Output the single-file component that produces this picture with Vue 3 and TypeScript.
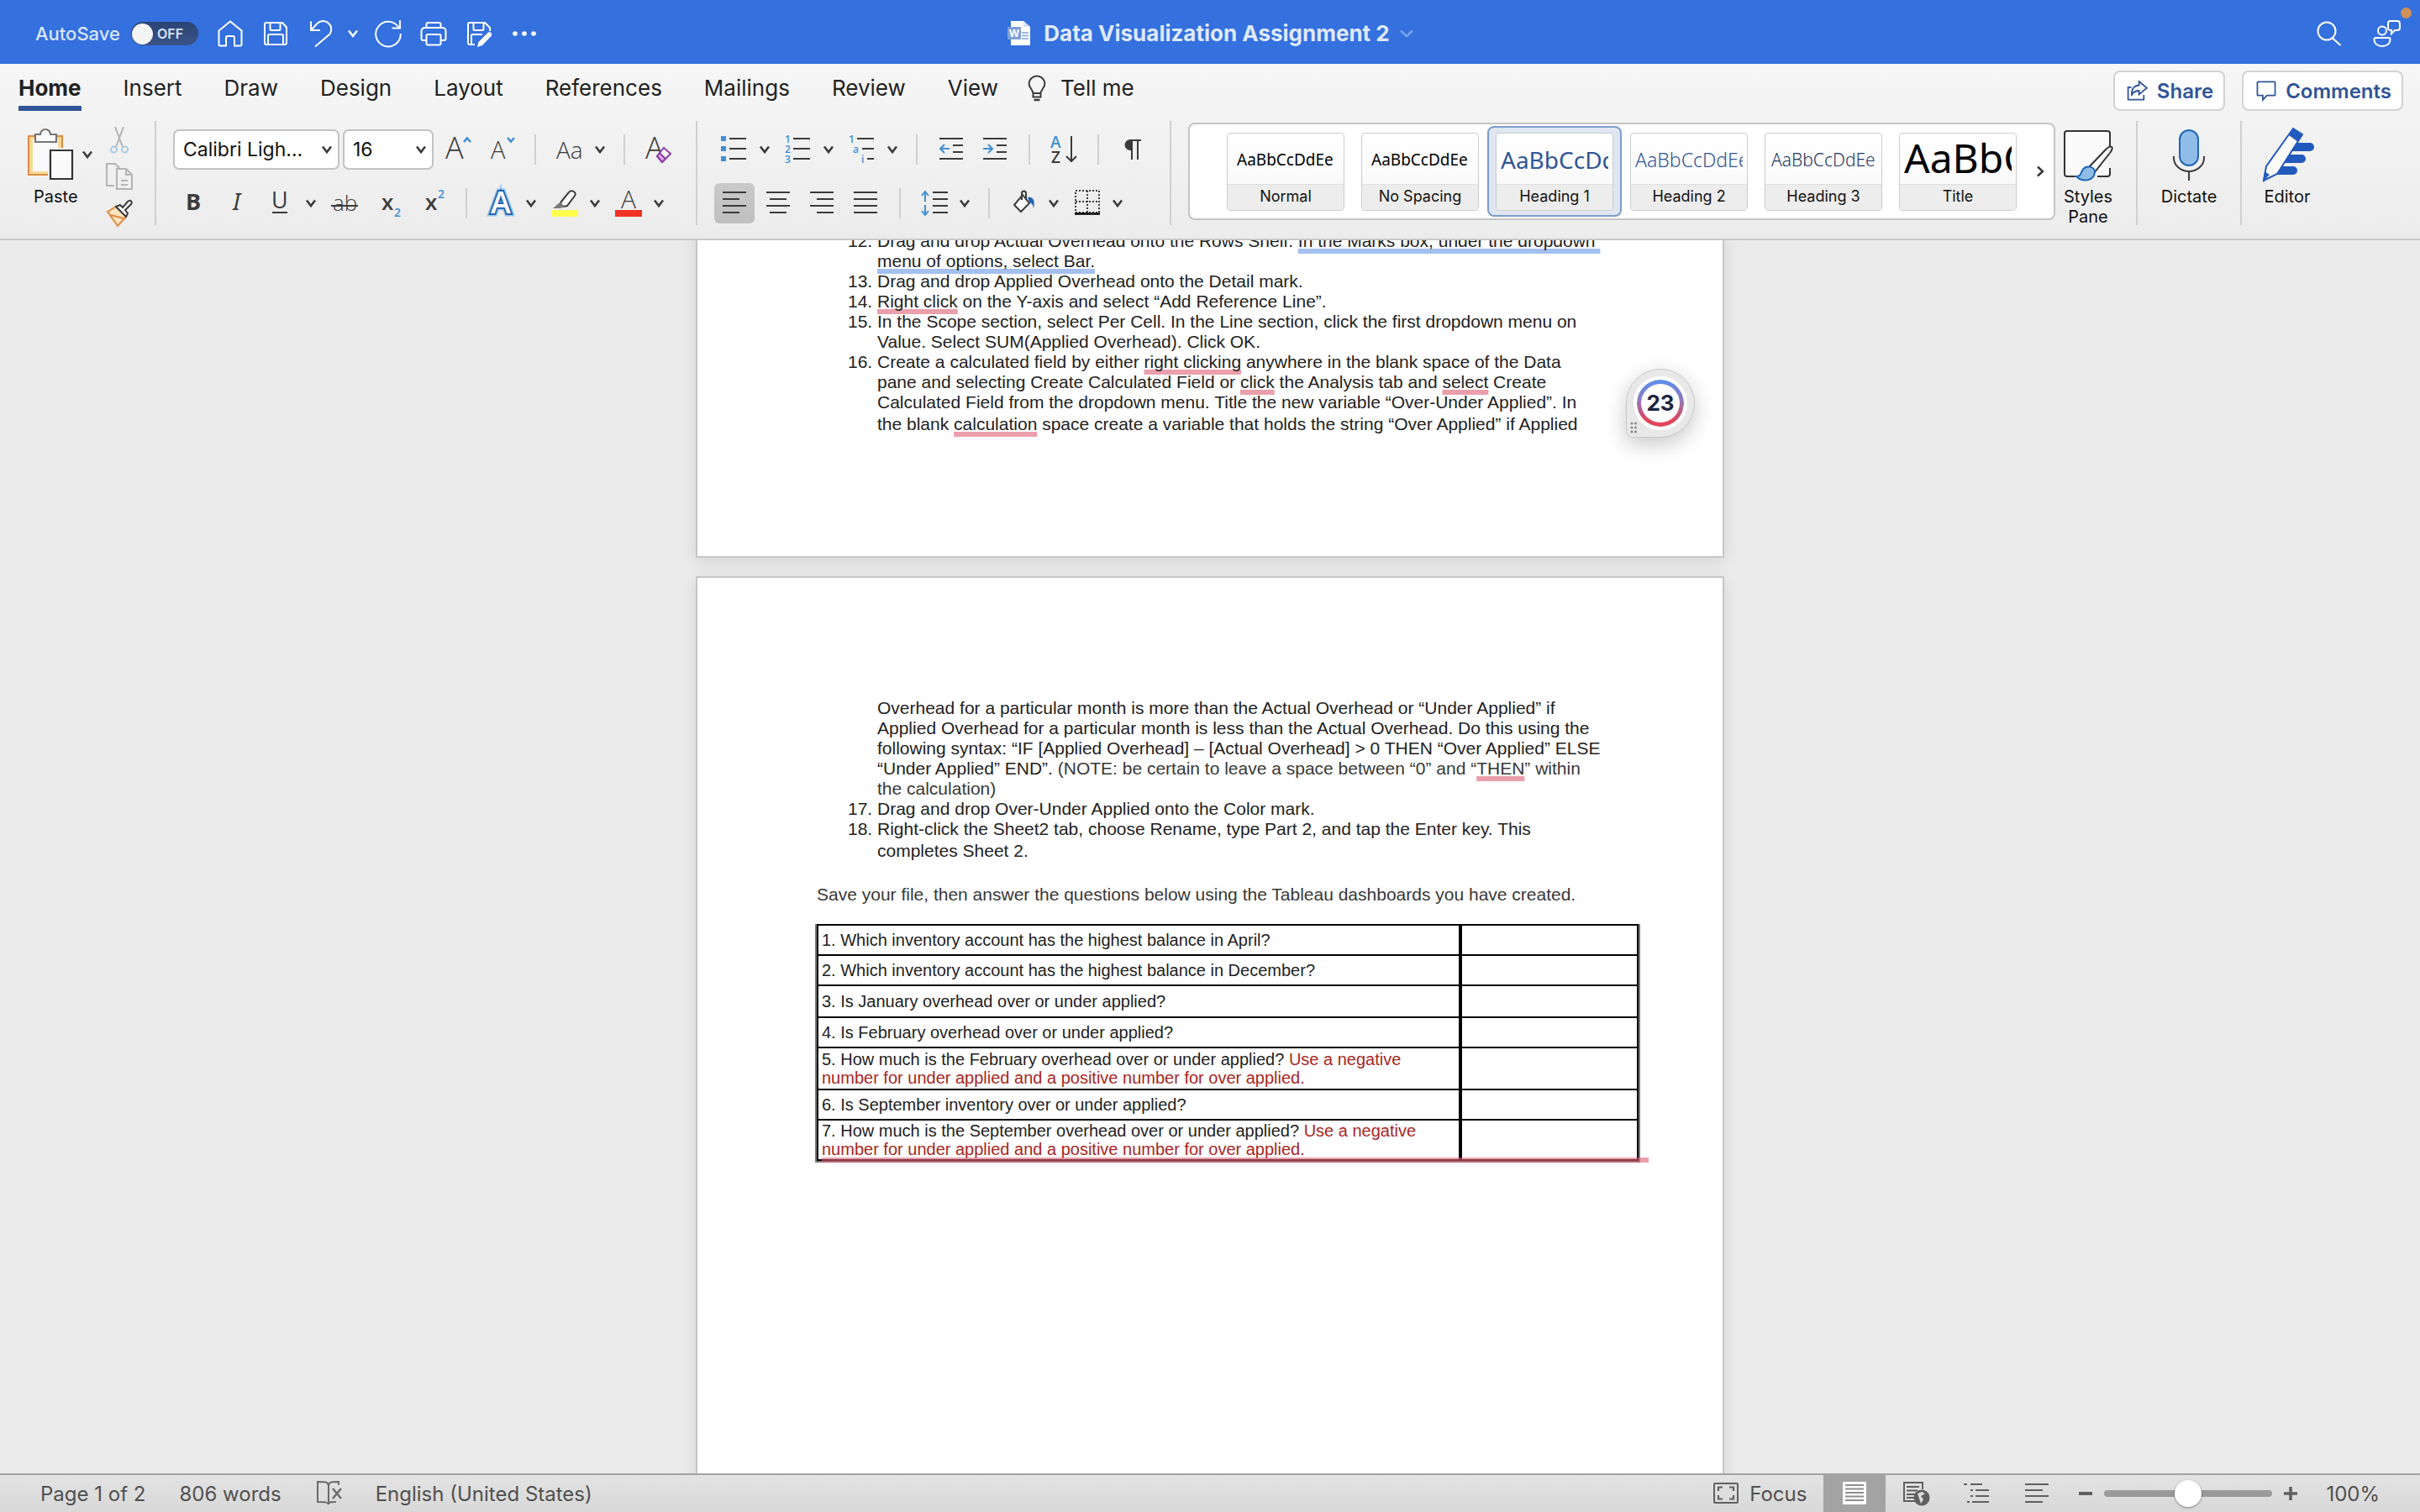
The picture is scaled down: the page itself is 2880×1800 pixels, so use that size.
<script setup lang="ts">
interface Style {
  name: string
  kind: string
  active?: boolean
}

interface Question {
  text: string
  hint?: string
  size: string
}

const tabs: string[] = ['Home', 'Insert', 'Draw', 'Design', 'Layout', 'References', 'Mailings', 'Review', 'View']

const styles: Style[] = [
  { name: 'Normal', kind: 'normal' },
  { name: 'No Spacing', kind: 'normal' },
  { name: 'Heading 1', kind: 'h1', active: true },
  { name: 'Heading 2', kind: 'h2' },
  { name: 'Heading 3', kind: 'h3' },
  { name: 'Title', kind: 'title' },
]

const hint = 'Use a negative number for under applied and a positive number for over applied.'

const questions: Question[] = [
  { text: '1. Which inventory account has the highest balance in April?', size: 'short' },
  { text: '2. Which inventory account has the highest balance in December?', size: 'short' },
  { text: '3. Is January overhead over or under applied?', size: 'medium' },
  { text: '4. Is February overhead over or under applied?', size: 'short' },
  { text: '5. How much is the February overhead over or under applied?', hint, size: 'tall' },
  { text: '6. Is September inventory over or under applied?', size: 'short' },
  { text: '7. How much is the September overhead over or under applied?', hint, size: 'tall' },
]

const ink = '#3b3b3b'
const blue = '#3f8fd2'
const sans = 'font-family="Open Sans, Noto Sans, sans-serif"'

const stroke = (d: string, color = ink, width = 2, fill = 'none'): string =>
  `<path d="${d}" fill="${fill}" stroke="${color}" stroke-width="${width}"/>`

const icons: Record<string, string> = {
  caret: '<path d="M1 1.500 6 8l5-6.500" fill="none" stroke="#3b3b3b" stroke-width="2.600"/>',
  home: stroke('M2.500 12.500 16 1.500l13.500 11V29a1.500 1.500 0 0 1-1.500 1.500h-7V21a2 2 0 0 0-2-2h-6a2 2 0 0 0-2 2v9.500H4A1.500 1.500 0 0 1 2.500 29z', '#fff'),
  save: stroke('M5 3h19l5 5.500V27a2 2 0 0 1-2 2H5a2 2 0 0 1-2-2V5a2 2 0 0 1 2-2zM9.500 3v7.500a1.500 1.500 0 0 0 1.500 1.500h9a1.500 1.500 0 0 0 1.500-1.500V3M7 29V18.500A1.500 1.500 0 0 1 8.500 17h15a1.500 1.500 0 0 1 1.500 1.500V29', '#fff'),
  undo: stroke('M4 1.500V12h11M4.500 11.500 11.500 4a9.800 9.800 0 0 1 15 12.500L9 31.500', '#fff'),
  redo: stroke('M20.500 9.500H30V0M29 9.500A14.800 14.800 0 1 0 30.800 16', '#fff'),
  print: stroke('M7.500 9V5a2 2 0 0 1 2-2h13a2 2 0 0 1 2 2v4M7.500 24H3.500a2 2 0 0 1-2-2V13a4 4 0 0 1 4-4h21a4 4 0 0 1 4 4v9a2 2 0 0 1-2 2h-4M9 17h14a1.500 1.500 0 0 1 1.500 1.500V28a1.500 1.500 0 0 1-1.500 1.500H9A1.500 1.500 0 0 1 7.500 28v-9.500A1.500 1.500 0 0 1 9 17z', '#fff'),
  saveas: stroke('M11 29H5a2 2 0 0 1-2-2V5a2 2 0 0 1 2-2h18l6 6v4M9.500 3v7.500a1.500 1.500 0 0 0 1.500 1.500h9a1.500 1.500 0 0 0 1.500-1.500V3M7 29V18.500A1.500 1.500 0 0 1 8.500 17H20', '#fff') +
    '<path d="m14 32 1.500-6L27 14.500a3 3 0 0 1 4 4L20 30z" fill="#fff"/>',
  dots: '<g fill="#fff"><circle cx="5" cy="16" r="2.800"/><circle cx="16" cy="16" r="2.800"/><circle cx="27" cy="16" r="2.800"/></g>',
  search: stroke('M20 21.500 29.500 30', '#fff') + '<circle cx="13" cy="13" r="10.500" fill="none" stroke="#fff" stroke-width="2"/>',
  people: '<circle cx="11" cy="12.500" r="5" fill="none" stroke="#fff" stroke-width="2"/>' +
    stroke('M3 21h16a1.500 1.500 0 0 1 1.500 1.500C20.500 28 16.500 31 11 31S1.500 28 1.500 22.500A1.500 1.500 0 0 1 3 21zM20 1h9a3 3 0 0 1 3 3v5a3 3 0 0 1-3 3h-3l-4 4v-4a3 3 0 0 1-4-3V4a3 3 0 0 1 2-3z', '#fff'),
  word: '<path d="M5 1h15l8 7v22H5z" fill="#fff"/><path d="M20 1v7h8z" fill="#d8e2f4"/><path d="M18 15h8M18 18.500h8M18 22h8" stroke="#7ea3e0" stroke-width="1.500"/><rect x="1" y="8" width="16" height="15" rx="1" fill="#7f9fd8"/><text x="9" y="20" font-size="12" font-weight="700" fill="#fff" text-anchor="middle" font-family="Inter, sans-serif">W</text>',
  bulb: stroke('M9.500 22c0-4-5-6-5-12A9.500 9.500 0 0 1 14 1.500 9.500 9.500 0 0 1 23.500 10c0 6-5 8-5 12zM9.500 22v4.500h9V22', ink) + stroke('M10.500 30h7', ink, 2.500),
  share: stroke('M7 11H2v18h23v-7', '#2f5597', 2.200) + stroke('M18 2.500 29.500 12 18 21.500V16C12 16 9 18 7 23 7 14 10 8.500 18 8z', '#2f5597', 2.200),
  comment: stroke('M4 3h24a1 1 0 0 1 1 1v18a1 1 0 0 1-1 1H17l-6 6.500V23H4a1 1 0 0 1-1-1V4a1 1 0 0 1 1-1z', '#2f5597', 2.200),
  paste: '<path d="M2 10h40v46H2z" fill="#f6d998" stroke="#e08a3c" stroke-width="2"/><path d="M7 13h30v39H7z" fill="#fafafa"/>' +
    '<path d="M10 8h6a6 6 0 0 1 12 0h7v9H10z" fill="#fafafa" stroke="#767676" stroke-width="2.200"/><path d="M25 24h32v36H25z" fill="#f2f2f2"/><path d="M28 27h26v34H28z" fill="#fafafa" stroke="#333" stroke-width="2.200"/>',
  cut: stroke('M11 1l9 24M21 1l-9 24', '#b4b4b4', 2) + '<g fill="none" stroke="#a9cde8" stroke-width="2"><circle cx="9.500" cy="28" r="3.500"/><circle cx="22.500" cy="28" r="3.500"/></g>',
  copy: stroke('M10 27H1V1h10l5 5M13 7h11l7 7v17H13zM24 7v7h7M18 21h8M18 26h8', '#b4b4b4', 2),
  painter: '<path d="M2 14 12 8l12 12-10 11z" fill="#fbe3bf" stroke="#e08a3c" stroke-width="2"/><path d="m6 18 15 4" stroke="#e08a3c" stroke-width="2"/><path d="m12 8 5-2 3 3 6-7c3-3 6 0 4 3l-7 7 3 4-2 4z" fill="#fafafa" stroke="#3b3b3b" stroke-width="2"/>',
  grow: `<text x="0" y="27" font-size="36" font-weight="300" fill="${ink}" ${sans}>A</text>` + stroke('M22 7 26 2.500 30 7', blue, 2.500),
  shrink: `<text x="2" y="27" font-size="29" font-weight="300" fill="${ink}" ${sans}>A</text>` + stroke('M22 2 26 6.500 30 2', blue, 2.500),
  eraser: `<text x="0" y="27" font-size="36" font-weight="300" fill="${ink}" ${sans}>A</text><path d="m14 24 8-10 8 7-10 10z" fill="#fff" stroke="#8e3fa4" stroke-width="2"/><path d="m14 24 3-4 7 7-4 4z" fill="#d9a6e3" stroke="#8e3fa4" stroke-width="2"/>`,
  bold: `<text x="7" y="24" font-size="27" font-weight="700" fill="${ink}" ${sans}>B</text>`,
  italic: `<text x="11" y="24" font-size="28" font-style="italic" fill="${ink}" font-family="Noto Sans, sans-serif">I</text>`,
  underline: `<text x="7" y="22" font-size="27" fill="${ink}" ${sans}>U</text>` + stroke('M8 27h18'),
  strike: `<text x="2" y="25" font-size="26" font-weight="300" fill="${ink}" ${sans}>ab</text>` + stroke('M0 19h32'),
  sub: `<text x="4" y="24" font-size="26" font-weight="600" fill="${ink}" ${sans}>x</text><text x="19" y="32" font-size="14" font-weight="600" fill="${blue}" ${sans}>2</text>`,
  sup: `<text x="4" y="24" font-size="26" font-weight="600" fill="${ink}" ${sans}>x</text><text x="19" y="10" font-size="14" font-weight="600" fill="${blue}" ${sans}>2</text>`,
  glow: `<g ${sans} font-size="36" font-weight="600" text-anchor="middle"><text x="16" y="28" fill="#9ec8ee" stroke="#9ec8ee" stroke-width="7">A</text><text x="16" y="28" fill="#1f66b5" stroke="#1f66b5" stroke-width="4">A</text><text x="16" y="28" fill="#fff">A</text></g>`,
  marker: '<path d="m12 14 9-11c3-4 10 0 7 4l-9 12-4 1-4-3z" fill="#fafafa" stroke="#3b3b3b" stroke-width="2"/><path d="m10 15 6 5-5 2H2z" fill="#7a7a7a"/><path d="M0 24h32v8H0z" fill="#ffff4d"/>',
  color: `<text x="16" y="22" font-size="30" font-weight="300" text-anchor="middle" fill="${ink}" ${sans}>A</text><path d="M0 24h32v8H0z" fill="#ee3124"/>`,
  bullets: '<path d="M0 0h6v6H0zM0 12h6v6H0zM0 24h6v6H0z" fill="#3f8fd2"/>' + stroke('M10 3h20M10 15h20M10 27h20'),
  numbers: `<g font-size="12" font-weight="600" fill="${blue}" ${sans}><text x="0" y="8">1</text><text x="0" y="20">2</text><text x="0" y="32">3</text></g>` + stroke('M10 3h20M10 15h20M10 27h20'),
  multilevel: `<g font-size="12" font-weight="600" fill="${blue}" ${sans}><text x="0" y="8">1</text><text x="5" y="20">a</text><text x="15" y="32">i</text></g>` + stroke('M10 3h20M16 15h14M22 27h8'),
  outdent: stroke('M2 3h28M18 11h12M18 19h12M2 27h28') + stroke('M14 15H3M8 10l-5 5 5 5', blue),
  indent: stroke('M2 3h28M18 11h12M18 19h12M2 27h28') + stroke('M2 15h11M8 10l5 5-5 5', blue),
  sort: `<g font-size="19" font-weight="600" ${sans}><text x="0" y="14" fill="${blue}">A</text><text x="1" y="32" fill="${ink}">Z</text></g>` + stroke('M25 0v30M19 24l6 6 6-6'),
  pilcrow: stroke('M15 5v23M22 5v23M13 5h13') + '<path d="M15 4v13h-2a6.500 6.500 0 0 1 0-13z" fill="#3b3b3b"/>',
  left: stroke('M2 3h28M2 11h20M2 19h28M2 27h20'),
  center: stroke('M2 3h28M6 11h20M2 19h28M6 27h20'),
  right: stroke('M2 3h28M10 11h20M2 19h28M10 27h20'),
  justify: stroke('M2 3h28M2 11h28M2 19h28M2 27h28'),
  spacing: stroke('M14 3h18M14 11h18M14 19h18M14 27h18') + stroke('M5 14V3M1 7l4-5 4 5M5 18v11M1 25l4 5 4-5', blue),
  bucket: '<path d="m15 6 8 10-10 10L5 18z" fill="#fafafa" stroke="#3b3b3b" stroke-width="2"/>' + stroke('M14 12V4a2.500 2.500 0 0 1 5 0v8') + '<path d="M21 9c7-1 9 4 7 13-1-5-2-6-5-7z" fill="#1f66b5"/>',
  border: '<path d="M2 1h28v26H2zM16 1v26M2 14h28" fill="none" stroke="#3b3b3b" stroke-width="2" stroke-dasharray="2 2"/><path d="M1 28.500h30" stroke="#000" stroke-width="2.500"/>',
  pane: '<rect x="3" y="4" width="54" height="54" rx="3" fill="#fafafa" stroke="#333" stroke-width="2"/><path d="M54 26h6v22h-6zM16 55h26v6H16z" fill="#f1f1f1"/><path d="m31 48 21-22c6-6 11-4 5 4L38 54z" fill="#fafafa" stroke="#333" stroke-width="2"/><path d="M17 58c5 0 5-3 7-7 4-7 14-5 15 1 0 11-14 14-22 6z" fill="#8fbde8" stroke="#1f66b5" stroke-width="2"/>',
  mic: '<rect x="20" y="3" width="22" height="42" rx="11" fill="#8fbde8" stroke="#1f66b5" stroke-width="2"/>' + stroke('M13 34v2a18 16 0 0 0 36 0v-2M31 52v11'),
  editor: '<path d="M32 18h26a5 5 0 0 1 0 10H26zM25 32h23a5 5 0 0 1 0 10H18zM18 46h20a5 5 0 0 1 0 10H10z" fill="#2159bd"/><path d="m38 1 11 7-30 47-16 8 3-17z" fill="#fafafa" stroke="#2159bd" stroke-width="2"/><path d="m38 1 11 8-5 8-11-8zM2 64l2-12 6 4z" fill="#2159bd"/>',
  proof: stroke('M16 29c-1-3-4-3-13-3V2c9 0 12 0 13 4V29M16 6c1-4 3-4 12-4v4M16 28c1-2 3-2 9-2', '#6a6a6a') + stroke('M21 10l10 12M31 10 21 22', '#6a6a6a', 2.400),
  focus: '<rect x="2" y="4" width="28" height="23" rx="1" fill="none" stroke="#606060" stroke-width="2"/>' + stroke('M7 13V8.500h5M20 8.500h5V13M25 18v4.500h-5M12 22.500H7V18', '#606060', 2.200),
  layout: '<rect x="2" y="2" width="28" height="27" rx="1" fill="#fff"/><path d="M5 6h22M5 10.500h22M5 15h22M5 19.500h22M5 24h22" stroke="#8e8e8e" stroke-width="2"/>',
  web: stroke('M15 25H2V3h22v8M5 8h15M5 12.500h13M5 17h10M5 21h9', '#606060') + '<circle cx="23" cy="21" r="9.500" fill="#606060"/><path d="m18 16 5-2 4 2-5 3 3 4-3 5-2-6z" fill="#dcdcdc"/>',
  outline: '<path d="M1 5h4M9 5h14M9 12h3M15 12h16M9 19h3M15 19h16M5 26h3M11 26h20" stroke="#606060" stroke-width="2.200"/>',
  draft: '<path d="M2 5h28M2 12h21M2 19h28M2 26h21" stroke="#606060" stroke-width="2.200"/>',
}

const fontRow2: string[] = ['bold', 'italic', 'underline', 'caret', 'strike', 'sub', 'sup', '|', 'glow', 'caret', 'marker', 'caret', 'color', 'caret']
const paraRow1: string[] = ['bullets', 'caret', 'numbers', 'caret', 'multilevel', 'caret', '|', 'outdent', 'indent', '|', 'sort', '|', 'pilcrow']
const paraRow2: string[] = ['left', 'center', 'right', 'justify', '|', 'spacing', 'caret', '|', 'bucket', 'caret', 'border', 'caret']
</script>

<template>
  <div class="app">
    <header class="titlebar">
      <div class="quick">
        <label class="autosave">
          <span>AutoSave</span>
          <span class="switch"><input type="checkbox" /><span>OFF</span></span>
        </label>
        <button v-for="n in ['home', 'save', 'undo']" :key="n" class="tool" :aria-label="n"><svg viewBox="0 0 32 32" v-html="icons[n]" /></button>
        <button class="caret white" aria-label="undo list"><svg viewBox="0 0 12 10"><path d="M1 1.500 6 8l5-6.500" fill="none" stroke="#fff" stroke-width="2.400" /></svg></button>
        <button v-for="n in ['redo', 'print', 'saveas', 'dots']" :key="n" class="tool" :aria-label="n"><svg viewBox="0 0 32 32" v-html="icons[n]" /></button>
      </div>
      <div class="doc-title">
        <svg class="glyph" viewBox="0 0 32 32" v-html="icons.word" />
        <h1>Data Visualization Assignment 2</h1>
        <svg class="title-caret" viewBox="0 0 16 10"><path d="M1 1.500 8 8l7-6.500" fill="none" stroke="#7ba3ea" stroke-width="2.400" /></svg>
      </div>
      <div class="title-right">
        <button class="tool" aria-label="Search"><svg viewBox="0 0 32 32" v-html="icons.search" /></button>
        <button class="tool presence" aria-label="Presence"><svg viewBox="0 0 32 32" v-html="icons.people" /></button>
      </div>
    </header>

    <section class="ribbon">
      <div class="tabline">
        <nav class="tabs">
          <button v-for="(t, i) in tabs" :key="t" :class="{ current: i === 0 }">{{ t }}</button>
          <button class="tellme"><svg class="glyph" viewBox="0 0 28 32" v-html="icons.bulb" />Tell me</button>
        </nav>
        <div class="actions">
          <button><svg viewBox="0 0 32 32" v-html="icons.share" />Share</button>
          <button><svg viewBox="0 0 32 32" v-html="icons.comment" />Comments</button>
        </div>
      </div>

      <div class="groups">
        <div class="clipboard">
          <button class="big paste">
            <svg viewBox="0 0 60 64" v-html="icons.paste" />
            <span>Paste</span>
          </button>
          <button class="caret paste-caret" aria-label="paste options"><svg viewBox="0 0 12 10" v-html="icons.caret" /></button>
          <div class="stack">
            <button v-for="n in ['cut', 'copy', 'painter']" :key="n" class="tool" :aria-label="n"><svg viewBox="0 0 32 32" v-html="icons[n]" /></button>
          </div>
        </div>
        <i class="divider" />

        <div class="rows font">
          <div class="row font-1">
            <span class="combo">
              <select aria-label="Font"><option>Calibri Ligh...</option></select>
              <svg viewBox="0 0 12 10" v-html="icons.caret" />
            </span>
            <span class="combo small">
              <select aria-label="Font size"><option>16</option></select>
              <svg viewBox="0 0 12 10" v-html="icons.caret" />
            </span>
            <button class="tool" aria-label="grow"><svg viewBox="0 0 32 32" v-html="icons.grow" /></button>
            <button class="tool" aria-label="shrink"><svg viewBox="0 0 32 32" v-html="icons.shrink" /></button>
            <i class="rule" />
            <button class="case">Aa</button>
            <button class="caret" aria-label="case options"><svg viewBox="0 0 12 10" v-html="icons.caret" /></button>
            <i class="rule" />
            <button class="tool" aria-label="clear"><svg viewBox="0 0 32 32" v-html="icons.eraser" /></button>
          </div>
          <div class="row font-2">
            <template v-for="(n, i) in fontRow2" :key="i">
              <i v-if="n === '|'" class="rule" />
              <button v-else :class="n === 'caret' ? 'caret' : 'tool'" :aria-label="n"><svg :viewBox="n === 'caret' ? '0 0 12 10' : '0 0 32 32'" v-html="icons[n]" /></button>
            </template>
          </div>
        </div>
        <i class="divider" />

        <div class="rows para">
          <div class="row para-1">
            <template v-for="(n, i) in paraRow1" :key="i">
              <i v-if="n === '|'" class="rule" />
              <button v-else :class="n === 'caret' ? 'caret' : 'tool'" :aria-label="n"><svg :viewBox="n === 'caret' ? '0 0 12 10' : '0 0 32 32'" v-html="icons[n]" /></button>
            </template>
          </div>
          <div class="row para-2">
            <template v-for="(n, i) in paraRow2" :key="i">
              <i v-if="n === '|'" class="rule" />
              <button v-else :class="[n === 'caret' ? 'caret' : 'tool', { pressed: n === 'left' }]" :aria-label="n"><svg :viewBox="n === 'caret' ? '0 0 12 10' : '0 0 32 32'" v-html="icons[n]" /></button>
            </template>
          </div>
        </div>
        <i class="divider" />

        <div class="gallery">
          <div class="cards">
            <button v-for="s in styles" :key="s.name" class="frame" :class="{ active: s.active }">
              <span class="card">
                <span class="sample" :class="s.kind">AaBbCcDdEe</span>
                <span class="caption">{{ s.name }}</span>
              </span>
            </button>
          </div>
          <button class="more" aria-label="More styles"><svg viewBox="0 0 10 14"><path d="M2 1.500 8 7l-6 5.500" fill="none" stroke="#333" stroke-width="2.400" /></svg></button>
        </div>

        <button class="big pane"><svg viewBox="0 0 62 64" v-html="icons.pane" /><span>Styles<br />Pane</span></button>
        <i class="divider" />
        <button class="big dictate"><svg viewBox="0 0 62 64" v-html="icons.mic" /><span>Dictate</span></button>
        <i class="divider" />
        <button class="big editor"><svg viewBox="0 0 62 64" v-html="icons.editor" /><span>Editor</span></button>
      </div>
    </section>

    <main class="workspace">
      <article class="page first">
        <ol>
          <li><b>12.</b><p>Drag and drop Actual Overhead onto the Rows Shelf. <u class="style">In the Marks box, under the dropdown&nbsp;</u><br /><u class="style">menu of options, select Bar.</u></p></li>
          <li><b>13.</b><p>Drag and drop Applied Overhead onto the Detail mark.</p></li>
          <li><b>14.</b><p><u>Right click</u> on the Y-axis and select “Add Reference Line”.</p></li>
          <li><b>15.</b><p>In the Scope section, select Per Cell. In the Line section, click the first dropdown menu on<br />Value. Select SUM(Applied Overhead). Click OK.</p></li>
          <li><b>16.</b><p>Create a calculated field by either <u>right clicking</u> anywhere in the blank space of the Data<br />pane and selecting Create Calculated Field or <u>click</u> the Analysis tab and <u>select</u> Create<br />Calculated Field from the dropdown menu. Title the new variable “Over-Under Applied”. In<br /><span class="last">the blank <u>calculation</u> space create a variable that holds the string “Over Applied” if Applied</span></p></li>
        </ol>
        <button class="checker" aria-label="23 suggestions">
          <span class="ring"><span>23</span></span>
          <svg class="grip" viewBox="0 0 8 14"><g fill="#888"><circle cx="2" cy="2" r="1.500" /><circle cx="6.500" cy="2" r="1.500" /><circle cx="2" cy="7" r="1.500" /><circle cx="6.500" cy="7" r="1.500" /><circle cx="2" cy="12" r="1.500" /><circle cx="6.500" cy="12" r="1.500" /></g></svg>
        </button>
      </article>

      <article class="page second">
        <ol>
          <li><b></b><p>Overhead for a particular month is more than the Actual Overhead or “Under Applied” if<br />Applied Overhead for a particular month is less than the Actual Overhead. Do this using the<br />following syntax: “IF [Applied Overhead] – [Actual Overhead] &gt; 0 THEN “Over Applied” ELSE<br />“Under Applied” END”. <span class="note">(NOTE: be certain to leave a space between “0” and “<u>THEN</u>” within<br />the calculation)</span></p></li>
          <li><b>17.</b><p>Drag and drop Over-Under Applied onto the Color mark.</p></li>
          <li><b>18.</b><p>Right-click the Sheet2 tab, choose Rename, type Part 2, and tap the Enter key. This<br /><span class="last">completes Sheet 2.</span></p></li>
        </ol>
        <p class="save-line note">Save your file, then answer the questions below using the Tableau dashboards you have created.</p>
        <div class="answers">
          <table>
            <tbody>
              <tr v-for="q in questions" :key="q.text" :class="q.size">
                <td>{{ q.text }}<template v-if="q.hint">{{ ' ' }}<em>{{ q.hint }}</em></template></td>
                <td></td>
              </tr>
            </tbody>
          </table>
        </div>
      </article>
    </main>

    <footer class="status">
      <div class="status-left">
        <span>Page 1 of 2</span>
        <span>806 words</span>
        <svg class="glyph" viewBox="0 0 32 32" v-html="icons.proof" />
        <span>English (United States)</span>
      </div>
      <div class="status-right">
        <button class="focus"><svg viewBox="0 0 32 32" v-html="icons.focus" />Focus</button>
        <button class="view on" aria-label="Print layout"><svg viewBox="0 0 32 32" v-html="icons.layout" /></button>
        <button v-for="n in ['web', 'outline', 'draft']" :key="n" class="view" :aria-label="n"><svg viewBox="0 0 32 32" v-html="icons[n]" /></button>
        <button class="step" aria-label="Zoom out"><svg viewBox="0 0 16 16"><path d="M0 8h16" stroke="#606060" stroke-width="4" /></svg></button>
        <input class="zoom" type="range" min="0" max="200" value="100" aria-label="Zoom" />
        <button class="step" aria-label="Zoom in"><svg viewBox="0 0 16 16"><path d="M0 8h16M8 0v16" stroke="#606060" stroke-width="3.600" /></svg></button>
        <span class="percent">100%</span>
      </div>
    </footer>
  </div>
</template>

<style>
body {
  margin: 0;
}
</style>

<style scoped>
* {
  box-sizing: border-box;
}
.app {
  display: flex;
  flex-direction: column;
  height: 100vh;
  font-family: Inter, 'Liberation Sans', sans-serif;
  background: #ebebeb;
  color: #222;
}
button {
  padding: 0;
  border: 0;
  background: none;
  font: inherit;
  color: inherit;
}
svg {
  display: block;
  overflow: visible;
  flex: none;
}
.glyph,
.tool,
.tool svg {
  width: 32px;
  height: 32px;
  flex: none;
}
.caret,
.caret svg {
  width: 12px;
  height: 10px;
  flex: none;
}

/* Title bar */
.titlebar {
  display: grid;
  grid-template-columns: 1fr auto 1fr;
  align-items: center;
  height: 76px;
  flex: none;
  padding: 4px 24px 0;
  background: #3470de;
  color: #fff;
}
.quick {
  display: flex;
  align-items: center;
  gap: 22px;
  padding-left: 18px;
}
.quick .white {
  margin: 0 -2px 0 -6px;
}
.autosave {
  display: flex;
  align-items: center;
  justify-content: space-between;
  width: 194px;
  font-size: 22px;
  font-weight: 500;
  color: #d9e5fa;
}
.switch {
  display: flex;
  align-items: center;
  gap: 5px;
  width: 80px;
  height: 28px;
  padding: 0 1px;
  border-radius: 14px;
  background: linear-gradient(#2b4374, #3a5488);
  font-size: 16px;
  font-weight: 600;
}
.switch input {
  appearance: none;
  width: 25px;
  height: 25px;
  margin: 0;
  border-radius: 50%;
  background: #f4f4f4;
}
.doc-title {
  display: flex;
  align-items: center;
  gap: 12px;
}
.doc-title h1 {
  margin: 0;
  font-size: 26px;
  line-height: 32px;
  font-weight: 700;
  color: #dfe9fb;
}
.title-caret {
  width: 16px;
  height: 10px;
}
.title-right {
  display: flex;
  justify-content: flex-end;
  gap: 36px;
}
.presence {
  position: relative;
}
.presence::after {
  content: '';
  position: absolute;
  right: -14px;
  top: -15px;
  width: 13px;
  height: 13px;
  border-radius: 50%;
  background: #cf9258;
}

/* Ribbon */
.ribbon {
  flex: none;
  height: 210px;
  border-bottom: 2px solid #c8c8c8;
  background: linear-gradient(#f6f6f6, #ececec);
}
.tabline {
  display: flex;
  justify-content: space-between;
  height: 68px;
  padding: 8px 20px 0 22px;
}
.tabs {
  display: flex;
  align-items: flex-start;
  gap: 50px;
  font-size: 26px;
}
.tabs button {
  height: 48px;
  border-bottom: 6px solid transparent;
  line-height: 42px;
  white-space: nowrap;
}
.tabs .current {
  font-weight: 700;
  border-image: linear-gradient(#2f5597, #2f5597) 1;
}
.tabs .tellme {
  display: flex;
  gap: 12px;
  margin-left: -20px;
  align-items: center;
}
.actions {
  display: flex;
  gap: 20px;
}
.actions button {
  display: flex;
  align-items: center;
  justify-content: center;
  gap: 10px;
  height: 48px;
  padding: 0 12px 0 14px;
  border: 2px solid #d2d2d2;
  border-radius: 8px;
  background: #fff;
  color: #2f5597;
  font-size: 24px;
  font-weight: 600;
}
.actions svg {
  width: 26px;
  height: 26px;
}
.groups {
  display: flex;
  height: 124px;
}
.divider {
  width: 2px;
  height: 124px;
  background: #d0d0d0;
  flex: none;
}
.rule {
  width: 2px;
  height: 36px;
  background: #d0d0d0;
}
.clipboard {
  display: flex;
  width: 184px;
  flex: none;
  padding-left: 32px;
}
.big {
  display: flex;
  flex-direction: column;
  align-items: center;
  gap: 6px;
  flex: none;
  padding-top: 8px;
  font-size: 20px;
  line-height: 24px;
  color: #111;
}
.big svg {
  width: 62px;
  height: 64px;
}
.paste {
  align-items: flex-start;
  width: 66px;
}
.paste svg {
  width: 60px;
}
.paste span {
  padding-left: 8px;
}
.paste-caret {
  margin-top: 35px;
}
.stack {
  display: flex;
  flex-direction: column;
  gap: 12px;
  padding: 6px 0 0 16px;
}
.rows {
  display: flex;
  flex-direction: column;
  gap: 16px;
  flex: none;
  padding-top: 10px;
}
.font {
  width: 642px;
  padding-left: 20px;
}
.para {
  width: 562px;
  padding-left: 20px;
}
.row {
  display: grid;
  align-items: center;
  height: 48px;
}
.font-1 {
  grid-template-columns: 202px 122px 52px 54px 26px 46px 34px 26px 32px;
}
.font-2 {
  grid-template-columns: 52px 50px 48px 30px 56px 52px 52px 26px 46px 30px 46px 30px 46px 12px;
  padding-left: 8px;
}
.para-1 {
  grid-template-columns: 46px 30px 46px 30px 46px 34px 26px 52px 56px 26px 56px 26px 32px;
  padding-left: 8px;
}
.para-2 {
  grid-template-columns: 60px 52px 52px 56px 26px 46px 34px 26px 46px 30px 46px 12px;
}
.pressed {
  display: flex;
  align-items: center;
  justify-content: center;
  width: 48px;
  height: 48px;
  border-radius: 6px;
  background: linear-gradient(#c9c9c9, #bfbfbf);
}
.combo {
  display: flex;
  align-items: center;
  justify-content: space-between;
  position: relative;
  width: 198px;
  height: 48px;
}
.combo.small {
  width: 108px;
}
.combo select {
  appearance: none;
  width: 100%;
  height: 48px;
  padding: 0 10px;
  border: 2px solid #c2c2c2;
  border-radius: 7px;
  background: #fff;
  color: #111;
  font: 23px Inter, sans-serif;
}
.combo svg {
  position: absolute;
  right: 9px;
  width: 12px;
  height: 10px;
}
.case {
  font: 300 28px 'Open Sans', 'Noto Sans', sans-serif;
  color: #3b3b3b;
  text-align: left;
}

/* Style gallery */
.gallery {
  display: flex;
  flex: 1;
  min-width: 0;
  height: 116px;
  margin: 2px 0 0 20px;
  padding-left: 34px;
  border: 2px solid #c4c4c4;
  border-radius: 8px;
  background: #fff;
}
.cards {
  display: flex;
  flex: 1;
  min-width: 0;
  overflow: hidden;
}
.frame {
  width: 160px;
  height: 108px;
  flex: none;
  margin-top: 2px;
  padding: 6px 8px;
  border: 2px solid transparent;
  border-radius: 8px;
}
.frame.active {
  border-color: #7c9ccb;
  background: #dfe6f1;
}
.card {
  display: flex;
  flex-direction: column;
  height: 93px;
  border: 1px solid #ccc;
  border-radius: 4px;
  background: linear-gradient(#fff, #f7f7f7);
  overflow: hidden;
}
.sample {
  display: block;
  flex: 1;
  margin: 0 5px;
  overflow: hidden;
  line-height: 62px;
  text-align: left;
  font-family: 'Noto Sans', sans-serif;
}
.sample.normal {
  padding-left: 6px;
  font-size: 19px;
  color: #000;
}
.sample.h1 {
  font-size: 28px;
  color: #2f5597;
}
.sample.h2 {
  font-size: 23px;
  font-weight: 300;
  color: #2f5597;
}
.sample.h3 {
  padding-left: 2px;
  font-size: 21px;
  font-weight: 300;
  color: #1f3763;
}
.sample.title {
  font-size: 48px;
  line-height: 58px;
  color: #000;
}
.caption {
  height: 31px;
  border-top: 1px solid #e0e0e0;
  background: #ededed;
  font-size: 18px;
  line-height: 28px;
  color: #111;
}
.more {
  width: 32px;
  flex: none;
}
.more svg {
  width: 10px;
  height: 14px;
  margin: 0 auto;
}
.pane {
  width: 96px;
  padding-right: 18px;
}
.dictate {
  width: 122px;
}
.editor {
  width: 212px;
  padding-right: 104px;
}

/* Document */
.workspace {
  display: flex;
  flex-direction: column;
  align-items: center;
  gap: 22px;
  flex: 1;
  min-height: 0;
  overflow: hidden;
  font-family: 'Liberation Sans', Arial, sans-serif;
  font-size: 21px;
  line-height: 24px;
}
.page {
  width: 1224px;
  flex: none;
  border: 2px solid #c6c6c6;
  background: #fff;
  box-shadow: 0 4px 20px rgba(0, 0, 0, 0.1);
}
.first {
  position: relative;
  margin-top: -13px;
  height: 391px;
}
.second {
  min-height: 1584px;
  padding-top: 143px;
}
ol {
  margin: 0;
  padding: 0 0 0 179px;
  list-style: none;
}
li {
  display: flex;
}
li b {
  width: 35px;
  flex: none;
  font-weight: 400;
}
p {
  margin: 0;
  white-space: nowrap;
}
.last {
  display: block;
  padding-top: 2px;
}
.note {
  color: #383838;
}
u {
  text-decoration: underline 6px #eb9fab;
  text-decoration-skip-ink: none;
  text-underline-offset: 2px;
}
u.style {
  text-decoration-color: #a4c0f0;
}
.save-line {
  margin: 28px 0 23px 142px;
}
.checker {
  position: absolute;
  right: 33px;
  top: 164px;
  display: flex;
  align-items: center;
  justify-content: center;
  width: 82px;
  height: 82px;
  border: 1px solid #c9c9c9;
  border-radius: 41px 41px 41px 8px;
  background: #e8e8e8;
  box-shadow: 0 8px 26px rgba(0, 0, 0, 0.22);
}
.ring {
  display: flex;
  width: 64px;
  height: 64px;
  padding: 5px;
  border: 4px solid #fff;
  border-radius: 50%;
  background: linear-gradient(#5b8fec, #8b7cc4 40%, #e0455a 85%);
  background-clip: padding-box;
}
.ring span {
  flex: 1;
  border-radius: 50%;
  background: #fff;
  font: 700 26px/46px Inter, sans-serif;
  color: #1c2440;
}
.grip {
  position: absolute;
  left: 4px;
  bottom: 4px;
  width: 8px;
  height: 14px;
}
.answers {
  position: relative;
  width: 982px;
  margin-left: 140px;
}
.answers::after {
  content: '';
  position: absolute;
  left: 8px;
  right: -10px;
  bottom: 0;
  height: 6px;
  background: rgba(224, 96, 116, 0.6);
}
table {
  width: 100%;
  border-collapse: separate;
  border-spacing: 0;
  border: solid #777;
  border-width: 0 2px 2px;
  font-size: 20px;
  line-height: 22px;
}
td {
  padding: 0 4px;
  border-top: 2px solid #000;
  vertical-align: middle;
}
td:first-child {
  width: 768px;
  padding-right: 40px;
  border-left: 2px solid #000;
  border-right: 4px solid #000;
}
td:last-child {
  border-right: 2px solid #000;
}
tr:last-child td {
  border-bottom: 2px solid #000;
}
.short td {
  height: 36px;
}
.medium td {
  height: 38px;
}
.tall td {
  height: 50px;
}
em {
  font-style: normal;
  color: #a92622;
}

/* Status bar */
.status {
  display: flex;
  justify-content: space-between;
  flex: none;
  height: 46px;
  border-top: 2px solid #a2a2a2;
  background: linear-gradient(#e3e3e3, #d8d8d8);
  font-size: 24px;
  color: #505050;
}
.status-left,
.status-right {
  display: flex;
  align-items: center;
}
.status-left {
  gap: 40px;
  padding-left: 48px;
}
.status-right {
  padding-right: 48px;
}
.focus {
  display: flex;
  align-items: center;
  gap: 12px;
  margin-right: 20px;
}
.focus svg,
.view svg {
  width: 32px;
  height: 32px;
}
.view {
  display: flex;
  align-items: center;
  justify-content: center;
  width: 72px;
  height: 44px;
}
.view.on {
  width: 74px;
  background: #a3a3a3;
}
.step,
.step svg {
  width: 16px;
  height: 16px;
}
.status-right .view + .step {
  margin-left: 14px;
}
.zoom {
  appearance: none;
  width: 200px;
  height: 8px;
  margin: 0 14px;
  border-radius: 4px;
  background: #9a9a9a;
}
.zoom::-webkit-slider-thumb {
  appearance: none;
  width: 32px;
  height: 32px;
  border-radius: 50%;
  background: #fff;
  box-shadow: 0 1px 3px rgba(0, 0, 0, 0.4);
}
.percent {
  margin-left: 34px;
}
</style>
